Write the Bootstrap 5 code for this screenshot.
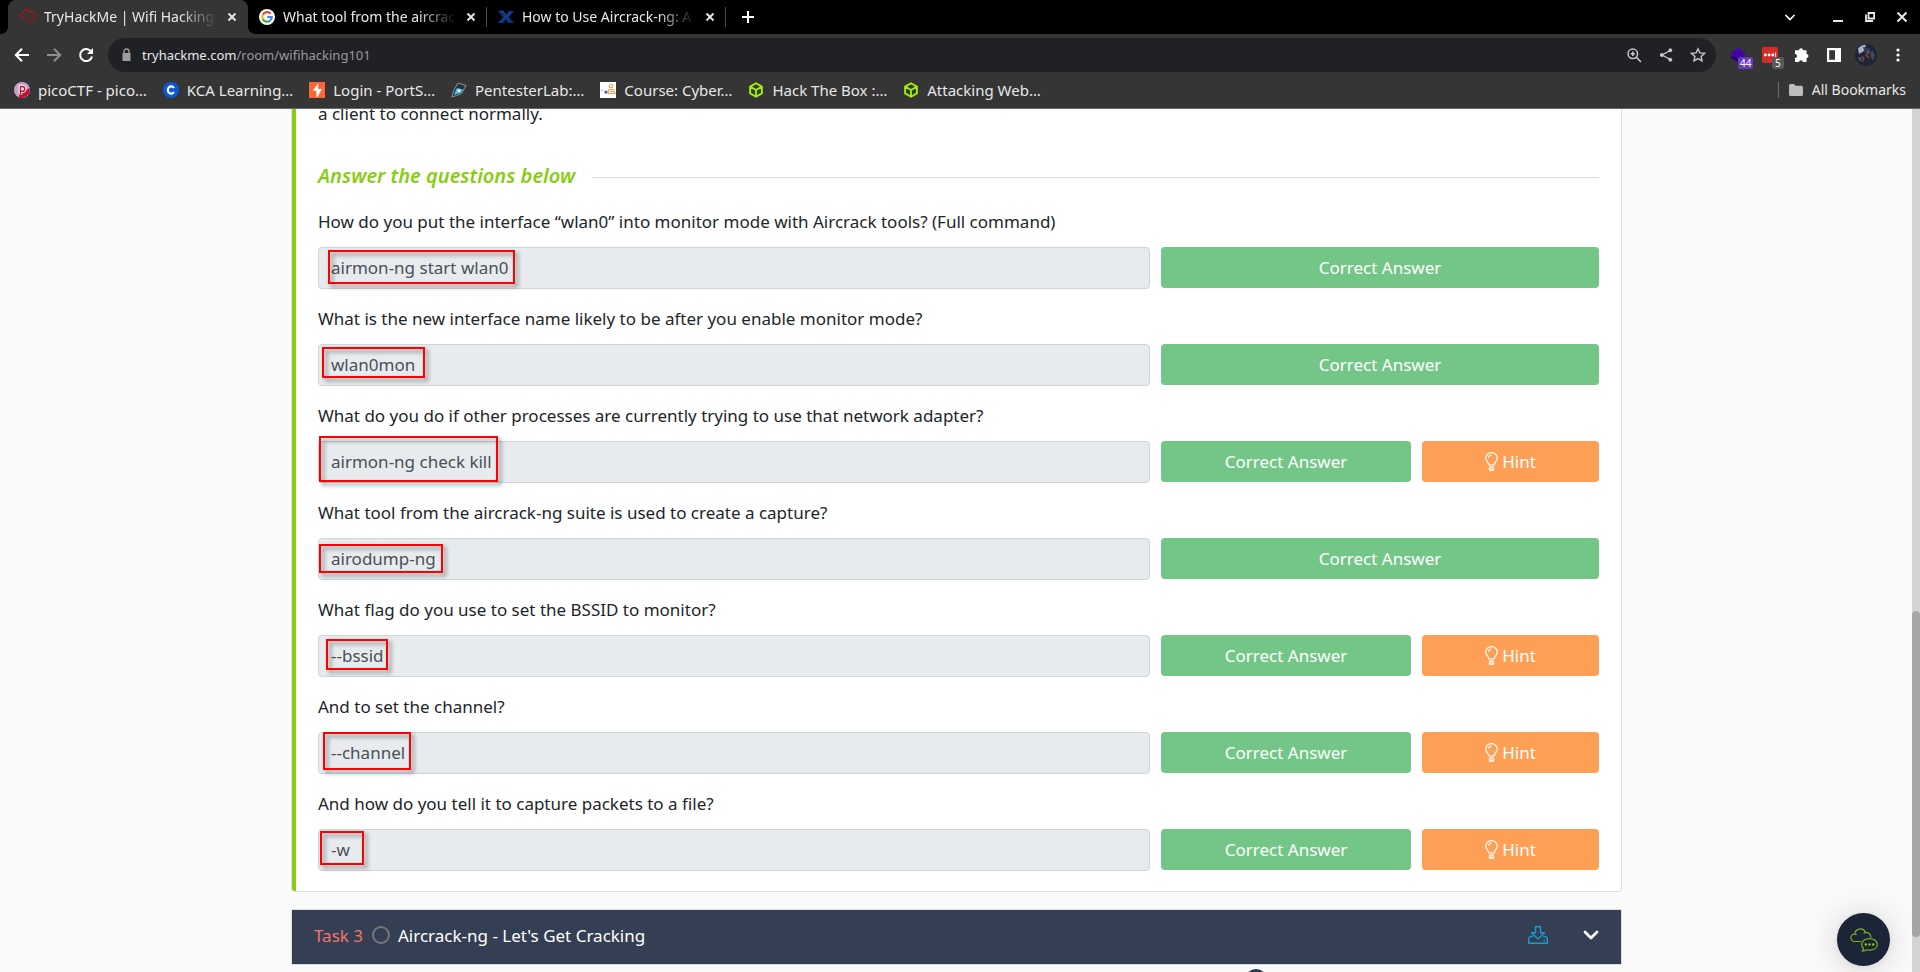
<!DOCTYPE html>
<html lang="en">
<head>
<meta charset="utf-8">
<meta name="viewport" content="width=device-width, initial-scale=1">
<title>TryHackMe | Wifi Hacking 101</title>
<link href="https://cdn.jsdelivr.net/npm/bootstrap@5.3.0/dist/css/bootstrap.min.css" rel="stylesheet">
<style>
  body { font-family: "Noto Sans", sans-serif; background: #fafafa; color: #212529; }
  svg { display: block; flex: none; }
  button svg { pointer-events: none; }

  /* browser frame */
  .frame-top { background: #353535; color: #e8e8e8; font-size: 14px; line-height: 20px; border-bottom: 1px solid #6b6666; }
  .plain-btn { background: none; border: 0; padding: 0; color: inherit; display: flex; align-items: center; justify-content: center; }
  .tab-strip { background: #000; height: 34px; padding-left: 8px; }
  .tab-item { width: 238px; height: 34px; padding: 0 8px 0 11px; gap: 8px; position: relative; }
  .tab-item.current { background: #353535; border-radius: 8px 8px 0 0; width: 240px; padding: 0 9px 0 12px; }
  .tab-item.current::before, .tab-item.current::after { content: ""; position: absolute; bottom: 0; width: 8px; height: 8px; }
  .tab-item.current::before { left: -8px; background: radial-gradient(circle at 0 0, #000 8px, #353535 8px); }
  .tab-item.current::after { right: -8px; background: radial-gradient(circle at 100% 0, #000 8px, #353535 8px); }
  .tab-name { flex: 1; min-width: 0; overflow: hidden; white-space: nowrap; color: #e8e8e8; text-decoration: none;
    -webkit-mask-image: linear-gradient(to right, #000 78%, transparent); mask-image: linear-gradient(to right, #000 78%, transparent); }
  .tab-close { width: 14px; height: 20px; }
  .tab-rule { width: 1px; height: 20px; background: #4a4a4a; }
  .window-tools { gap: 16px; padding: 0 10px 0 0; }
  .tool-row { height: 42px; padding: 0 14px; gap: 10px; }
  .tool-row .plain-btn { width: 16px; height: 34px; flex: none; }
  .url-box { background: #202124; border-radius: 17px; height: 34px; font-size: 13px; color: #e8e8e8; padding: 0 10px 0 13px; gap: 10px; }
  .url-path { color: #9a9a9a; }
  .ext-tag { position: absolute; left: 8px; top: 19px; font-size: 10px; line-height: 12px; color: #fff; border-radius: 2px; padding: 0 2px; background: #673ab7; }
  .ext-tag.grey { background: #585858; padding: 0 3px; left: 10px; }
  .mark-row { height: 32px; padding: 0 14px 4px 14px; gap: 16px; font-size: 15px; }
  .mark-link { display: flex; align-items: center; gap: 8px; color: #e8e8e8; text-decoration: none; white-space: nowrap; }
  .mark-all { gap: 9px; font-size: 14px; }
  .mark-rule { width: 1px; height: 16px; background: #707070; }

  /* room page */
  .viewport { position: relative; overflow: hidden; padding: 0 8px 0 1px; }
  .room { max-width: 1331px; width: 100%; font-size: 17px; line-height: 27px; }
  .task-card { background: #fff; border: 1px solid #dedede; border-top: 0; border-radius: 0 0 4px 4px; }
  .task-body { border-left: 4px solid #88cc14; padding: 0 22px 20px 22px; border-bottom-left-radius: 3px; }
  .task-end { margin: -9px 0 34px; }
  .ask-title { color: #88cc14; font-size: 20px; font-weight: 600; font-style: italic; line-height: 30px; margin: 0; }
  .ask-head { gap: 17px; margin-bottom: 18px; }
  .ask-head hr { margin: 2px 0 0; border-color: #777; }
  .question + .question { margin-top: 17px; }
  .question label { display: block; line-height: 25px; margin-bottom: 13px; }
  .answer-row { position: relative; display: grid; grid-template-columns: 832fr 438fr; gap: 11px; }
  .answer-row .form-control { height: 42px; padding: 0 12px 2px; font-size: 17px; background: #e7ebee; border-color: #ced4da; border-radius: 4px; color: #495057; }
  .answer-tools { display: grid; grid-template-columns: 250fr 177fr; gap: 11px; }
  .answer-tools .btn { height: 41px; padding: 0; font-size: 17px; border: 0; border-radius: 4px; color: #fff; opacity: 1; }
  .answer-tools .btn:only-child { grid-column: 1 / -1; }
  .btn-right { background: #74c687 !important; }
  .btn-hint { background: #fd9f54 !important; display: flex; align-items: center; justify-content: center; gap: 4px; }
  .callout { position: absolute; border: 2px solid #f00; filter: drop-shadow(3px 3px 2px rgba(0,0,0,.45)); pointer-events: none; }
  .callout-start { left: 10px; top: 3px; width: 187px; height: 34px; }
  .callout-name { left: 4px; top: 3px; width: 103px; height: 31px; }
  .callout-kill { left: 1px; top: -5px; width: 179px; height: 46px; }
  .callout-dump { left: 1px; top: 6px; width: 124px; height: 29px; }
  .callout-bssid { left: 8px; top: 4px; width: 62px; height: 31px; }
  .callout-channel { left: 5px; top: 0; width: 88px; height: 38px; }
  .callout-write { left: 2px; top: 2px; width: 44px; height: 34px; }
  .next-task { background: #353f54; color: #fff; border: 1px solid #dedede; margin-top: 17px; height: 56px; padding: 0 22px 4px; }
  .next-task .task-no { color: #f4736e; }
  .ring { width: 18px; height: 18px; border: 2px solid #777; border-radius: 50%; margin: 0 8px 0 9px; }
  .task-icons { gap: 35px; }
  .pin-dot { width: 22px; height: 22px; border-radius: 50%; background: #2a3850; margin: 4px 355px 0 auto; }
  .scroll-track { position: absolute; right: 0; top: 0; bottom: 0; width: 8px; background: #d4d4d4; }
  .scroll-thumb { position: absolute; left: 0; right: 0; top: 58.2%; height: 37.7%; background: #a5a5a5; border-radius: 4px; }
  .chat-btn { position: absolute; right: 30px; bottom: 6px; width: 53px; height: 53px; border-radius: 50%; border: 0; background: #1c2538; padding: 0; box-shadow: 0 1px 6px rgba(0,0,0,.06), 0 2px 32px rgba(0,0,0,.16); display: flex; align-items: center; justify-content: center; }
</style>
</head>
<body class="vh-100 d-flex flex-column overflow-hidden">

<svg width="0" height="0" class="position-absolute" aria-hidden="true">
  <symbol id="i-close" viewBox="0 0 14 14"><path d="M3.500 3.500l7 7M10.500 3.500l-7 7" stroke="currentColor" stroke-width="1.900"/></symbol>
  <symbol id="i-bulb" viewBox="0 0 13 19"><g fill="none" stroke="currentColor" stroke-width="1.200"><path d="M4 13c0-2.500-3.300-3.500-3.300-7a5.800 5.300 0 0 1 11.600 0c0 3.500-3.300 4.500-3.300 7z"/><path d="M3.500 5.800c0-1.600 1.200-2.700 2.800-2.700M4 15.200h5M4.300 17h4.400l-.8 1.300H5z"/></g></symbol>
  <symbol id="i-box" viewBox="0 0 16 16"><path d="M8 1.200l5.900 3.400v6.800L8 14.800l-5.900-3.400V4.600zM2.100 4.600L8 8l5.900-3.400M8 8v6.800" fill="none" stroke="#9fef00" stroke-width="1.900" stroke-linejoin="round"/></symbol>
</svg>

<header class="frame-top flex-shrink-0">
  <div class="tab-strip d-flex align-items-center">
    <div class="tab-item current d-flex align-items-center">
      <svg width="16" height="16" viewBox="0 0 16 16" fill="none" stroke="#b01318" stroke-width="1.200"><path d="M4.500 9.500H3.200A2.700 2.700 0 0 1 3 4.200 3.800 3.800 0 0 1 10.300 3a3 3 0 0 1 4.400 2.800A2.200 2.200 0 0 1 13.500 8"/><path d="M7 9h2M11 9h3M6 12h2M10 11.500h1.500M13 12h1.500M8.500 14.500H11M13.300 15h1" stroke="#8e1418" stroke-width="1.300"/></svg>
      <a class="tab-name" href="#">TryHackMe | Wifi Hacking 101</a>
      <button class="plain-btn tab-close" type="button" aria-label="Close tab"><svg width="14" height="14"><use href="#i-close"/></svg></button>
    </div>
    <div class="tab-item d-flex align-items-center">
      <svg width="16" height="16" viewBox="0 0 16 16"><circle cx="8" cy="8" r="8" fill="#fff"/><g fill="none" stroke-width="2.200"><path d="M11.600 4.700A4.700 4.700 0 0 0 3.900 5.700" stroke="#ea4335"/><path d="M3.900 5.700a4.700 4.700 0 0 0 0 4.600" stroke="#fbbc05"/><path d="M3.900 10.300a4.700 4.700 0 0 0 7.300 1.200" stroke="#34a853"/><path d="M11.200 11.500A4.700 4.700 0 0 0 12.700 8H8.200" stroke="#4285f4"/></g></svg>
      <a class="tab-name" href="#">What tool from the aircrack-ng suite</a>
      <button class="plain-btn tab-close" type="button" aria-label="Close tab"><svg width="14" height="14"><use href="#i-close"/></svg></button>
    </div>
    <span class="tab-rule"></span>
    <div class="tab-item d-flex align-items-center">
      <svg width="16" height="16" viewBox="0 0 16 16"><path d="M0 2h5.500l2.500 3.500L10.500 2H16l-5 6 5 6h-5.500L8 10.500 5.500 14H0l5-6z" fill="#0d2f7d"/><path d="M1 2h4l6 11M1 14L14.500 2.500" fill="none" stroke="#3b5fa8" stroke-width=".5"/></svg>
      <a class="tab-name" href="#">How to Use Aircrack-ng: A Guide</a>
      <button class="plain-btn tab-close" type="button" aria-label="Close tab"><svg width="14" height="14"><use href="#i-close"/></svg></button>
    </div>
    <span class="tab-rule"></span>
    <button class="plain-btn ms-3" type="button" aria-label="New tab"><svg width="12" height="12" viewBox="0 0 12 12"><path d="M6 0v12M0 6h12" stroke="#fff" stroke-width="2"/></svg></button>
    <div class="window-tools d-flex align-items-center ms-auto">
      <button class="plain-btn me-3" type="button" aria-label="Search tabs"><svg width="16" height="16" viewBox="0 0 16 16"><path d="M3.500 6L8 10.500 12.500 6" fill="none" stroke="#fff" stroke-width="1.700"/></svg></button>
      <button class="plain-btn" type="button" aria-label="Minimize"><svg width="16" height="16" viewBox="0 0 16 16"><path d="M3 12h10" stroke="#e8e8e8" stroke-width="2"/></svg></button>
      <button class="plain-btn" type="button" aria-label="Restore"><svg width="16" height="16" viewBox="0 0 16 16" fill="none" stroke="#e8e8e8" stroke-width="1.800"><path d="M6.500 4h5.600v5.500H6.500z"/><path d="M4 5.500V12h7"/></svg></button>
      <button class="plain-btn" type="button" aria-label="Close window"><svg width="16" height="16" viewBox="0 0 16 16"><path d="M3.500 3.500l9 9M12.500 3.500l-9 9" stroke="#e8e8e8" stroke-width="2"/></svg></button>
    </div>
  </div>

  <div class="tool-row d-flex align-items-center">
    <div class="d-flex gap-3 me-1">
      <button class="plain-btn" type="button" aria-label="Back"><svg width="16" height="16" viewBox="0 0 16 16"><path d="M15 8H2M8 1.800L1.800 8 8 14.200" fill="none" stroke="#fff" stroke-width="2"/></svg></button>
      <button class="plain-btn" type="button" aria-label="Forward"><svg width="16" height="16" viewBox="0 0 16 16"><path d="M1 8h13M8 1.800L14.200 8 8 14.200" fill="none" stroke="#8d8d8d" stroke-width="2"/></svg></button>
      <button class="plain-btn" type="button" aria-label="Reload"><svg width="16" height="16" viewBox="0 0 16 16"><path d="M13.200 4.800A6 6 0 1 0 14 9.500" fill="none" stroke="#fff" stroke-width="2"/><path d="M15 1v6H9z" fill="#fff"/></svg></button>
    </div>
    <div class="url-box d-flex align-items-center flex-grow-1">
      <svg width="11" height="14" viewBox="0 0 11 14"><path d="M1.500 5h8v8h-8z" fill="#9a9ca0"/><path d="M3 5.500V3.500a2.500 2.500 0 0 1 5 0v2" fill="none" stroke="#9a9ca0" stroke-width="1.400"/></svg>
      <div role="textbox" aria-label="Address">tryhackme.com<span class="url-path">/room/wifihacking101</span></div>
      <div class="d-flex gap-3 ms-auto">
        <button class="plain-btn" type="button" aria-label="Zoom"><svg width="16" height="16" viewBox="0 0 16 16" fill="none" stroke="#c8c8c8" stroke-width="1.500"><circle cx="6.800" cy="6.800" r="4.800"/><path d="M10.400 10.400L15 15M4.600 6.800H9M6.800 4.600V9"/></svg></button>
        <button class="plain-btn" type="button" aria-label="Share"><svg width="16" height="16" viewBox="0 0 16 16" fill="#c8c8c8" stroke="#c8c8c8"><path d="M12.200 3.500L4 8l8.200 4.500" fill="none" stroke-width="1.300"/><circle cx="12.300" cy="3.300" r="1.500"/><circle cx="3.800" cy="8" r="1.500"/><circle cx="12.300" cy="12.700" r="1.500"/></svg></button>
        <button class="plain-btn" type="button" aria-label="Bookmark"><svg width="16" height="16" viewBox="0 0 16 16"><path d="M8 1.800l1.900 4.100 4.500.5-3.300 3 .9 4.400L8 11.600l-4 2.200.9-4.400-3.300-3 4.500-.5z" fill="none" stroke="#c8c8c8" stroke-width="1.400"/></svg></button>
      </div>
    </div>
    <div class="d-flex gap-3 ms-1">
      <button class="plain-btn position-relative" type="button" aria-label="Extension"><svg width="16" height="16" viewBox="0 0 16 16"><path d="M0 10.500L8 6l8 4.500L8 15z" fill="#26007a"/><path d="M0 6.500L8 .8l8 5.700-8 5.500z" fill="#4303a8"/></svg><span class="ext-tag">44</span></button>
      <button class="plain-btn position-relative" type="button" aria-label="Password manager"><svg width="16" height="16" viewBox="0 0 16 16"><rect width="16" height="16" rx="1.500" fill="#d32d27"/><g fill="#fff"><circle cx="3.400" cy="8" r="1.400"/><circle cx="7.100" cy="8" r="1.400"/><circle cx="10.800" cy="8" r="1.400"/><path d="M13.200 5.500h.9v5h-.9z"/></g></svg><span class="ext-tag grey">5</span></button>
      <button class="plain-btn" type="button" aria-label="Extensions"><svg width="16" height="16" viewBox="0 0 16 16"><path d="M5 3.300a2 2 0 0 1 4 0h3.500v3.600a2 2 0 1 1 0 4V15H9a2.100 2.100 0 0 0-4.100 0H1v-3.900a2.100 2.100 0 0 0 0-4.200V3.300z" fill="#fff"/></svg></button>
      <button class="plain-btn" type="button" aria-label="Side panel"><svg width="16" height="16" viewBox="0 0 16 16"><path d="M1 1h14v14H1zM3.200 3.200v9.600H9V3.200z" fill="#fff" fill-rule="evenodd"/></svg></button>
      <button class="plain-btn" type="button" aria-label="Profile"><svg width="22" height="22" viewBox="0 0 22 22"><circle cx="11" cy="11" r="11" fill="#1e2433"/><path d="M3 4.500a10 10 0 0 1 8-3.800L9 7l-5 3z" fill="#aab0c0"/><path d="M8 3l6 1 3 5-4-1-3 2z" fill="#333c58"/><path d="M12 7l2 2-3 2 3 3M7 12l2 3-2 3" fill="none" stroke="#8f4b45" stroke-width="1.200"/><path d="M17 6l3 5-2 6-3-5z" fill="#394960"/><path d="M3 13l4 1-2 4z" fill="#4a5d75"/></svg></button>
      <button class="plain-btn" type="button" aria-label="Menu"><svg width="16" height="16" viewBox="0 0 16 16" fill="#fff"><circle cx="8" cy="3" r="1.600"/><circle cx="8" cy="8" r="1.600"/><circle cx="8" cy="13" r="1.600"/></svg></button>
    </div>
  </div>

  <nav class="mark-row d-flex align-items-center" aria-label="Bookmarks">
    <a class="mark-link" href="#"><svg width="16" height="16" viewBox="0 0 16 16"><circle cx="8" cy="8" r="8" fill="#c8a2cd"/><path d="M15.500 6A8 8 0 0 1 5 15.400V12z" fill="#c41230"/><path d="M6.500 12.500v-8H8.300a2.400 2.400 0 0 1 0 4.800H6.500" fill="none" stroke="#fff" stroke-width="3.600"/><path d="M6.500 12.500v-8H8.300a2.400 2.400 0 0 1 0 4.800H6.500" fill="none" stroke="#c41230" stroke-width="1.500"/></svg>picoCTF - pico…</a>
    <a class="mark-link" href="#"><svg width="16" height="16" viewBox="0 0 16 16"><circle cx="8" cy="8" r="8" fill="#0b57d8"/><path d="M10.900 6A3.300 3.600 0 1 0 10.900 10" fill="none" stroke="#fff" stroke-width="2.200"/></svg>KCA Learning…</a>
    <a class="mark-link" href="#"><svg width="16" height="16" viewBox="0 0 16 16"><path d="M0 0h16v16H0z" fill="#ff6633"/><path d="M9.300 1L3.800 8.800h3.600V15h1.200l4.200-8H9.200V1z" fill="#fff"/></svg>Login - PortS…</a>
    <a class="mark-link" href="#"><svg width="16" height="16" viewBox="0 0 16 16"><path d="M7 1l8 2.500-4.500 8-5 2L.8 15 3 8z" fill="#26333c" stroke="#7d9aa8"/><path d="M6 6l6 1.500-2.500 3.500-4 1L3 13l1.500-4z" fill="#5bc0e8"/><circle cx="8" cy="8.800" r="1.300" fill="#fff"/></svg>PentesterLab:…</a>
    <a class="mark-link" href="#"><svg width="16" height="16" viewBox="0 0 16 16"><path d="M0 0h16v16H0z" fill="#fff"/><path d="M1 8.200h2M4.500 9h3l-.8 2.500H5z" fill="#2b4aa0" stroke="#7d93c8" stroke-width=".8"/><g fill="none" stroke="#f0a050" stroke-width="1.100"><circle cx="11" cy="4" r="1.700"/><path d="M9 7.500h4l2 4H8zM10 9.500h3"/></g></svg>Course: Cyber…</a>
    <a class="mark-link" href="#"><svg width="16" height="16"><use href="#i-box"/></svg>Hack The Box :…</a>
    <a class="mark-link" href="#"><svg width="16" height="16"><use href="#i-box"/></svg>Attacking Web…</a>
    <div class="mark-all d-flex align-items-center ms-auto">
      <span class="mark-rule"></span>
      <a class="mark-link" href="#"><svg width="16" height="16" viewBox="0 0 16 16"><path d="M1 3.500A1.500 1.500 0 0 1 2.500 2H6l1.700 1.700h5.800A1.500 1.500 0 0 1 15 5.200v7.300a1.500 1.500 0 0 1-1.500 1.500h-11A1.500 1.500 0 0 1 1 12.500z" fill="#bdbdbd"/></svg>All Bookmarks</a>
    </div>
  </nav>
</header>

<main class="viewport flex-grow-1">
  <div class="room mx-auto">
    <section class="task-card">
      <div class="task-body">
        <p class="task-end">a client to connect normally.</p>
        <div class="ask-head d-flex align-items-center">
          <h2 class="ask-title">Answer the questions below</h2>
          <hr class="flex-grow-1">
        </div>

        <div class="question">
          <label for="q1">How do you put the interface “wlan0” into monitor mode with Aircrack tools? (Full command)</label>
          <div class="answer-row">
            <input class="form-control" id="q1" value="airmon-ng start wlan0" disabled>
            <div class="answer-tools"><button class="btn btn-right" type="button" disabled>Correct Answer</button></div>
            <span class="callout callout-start"></span>
          </div>
        </div>
        <div class="question">
          <label for="q2">What is the new interface name likely to be after you enable monitor mode?</label>
          <div class="answer-row">
            <input class="form-control" id="q2" value="wlan0mon" disabled>
            <div class="answer-tools"><button class="btn btn-right" type="button" disabled>Correct Answer</button></div>
            <span class="callout callout-name"></span>
          </div>
        </div>
        <div class="question">
          <label for="q3">What do you do if other processes are currently trying to use that network adapter?</label>
          <div class="answer-row">
            <input class="form-control" id="q3" value="airmon-ng check kill" disabled>
            <div class="answer-tools"><button class="btn btn-right" type="button" disabled>Correct Answer</button><button class="btn btn-hint" type="button"><svg width="13" height="19"><use href="#i-bulb"/></svg>Hint</button></div>
            <span class="callout callout-kill"></span>
          </div>
        </div>
        <div class="question">
          <label for="q4">What tool from the aircrack-ng suite is used to create a capture?</label>
          <div class="answer-row">
            <input class="form-control" id="q4" value="airodump-ng" disabled>
            <div class="answer-tools"><button class="btn btn-right" type="button" disabled>Correct Answer</button></div>
            <span class="callout callout-dump"></span>
          </div>
        </div>
        <div class="question">
          <label for="q5">What flag do you use to set the BSSID to monitor?</label>
          <div class="answer-row">
            <input class="form-control" id="q5" value="--bssid" disabled>
            <div class="answer-tools"><button class="btn btn-right" type="button" disabled>Correct Answer</button><button class="btn btn-hint" type="button"><svg width="13" height="19"><use href="#i-bulb"/></svg>Hint</button></div>
            <span class="callout callout-bssid"></span>
          </div>
        </div>
        <div class="question">
          <label for="q6">And to set the channel?</label>
          <div class="answer-row">
            <input class="form-control" id="q6" value="--channel" disabled>
            <div class="answer-tools"><button class="btn btn-right" type="button" disabled>Correct Answer</button><button class="btn btn-hint" type="button"><svg width="13" height="19"><use href="#i-bulb"/></svg>Hint</button></div>
            <span class="callout callout-channel"></span>
          </div>
        </div>
        <div class="question">
          <label for="q7">And how do you tell it to capture packets to a file?</label>
          <div class="answer-row">
            <input class="form-control" id="q7" value="-w" disabled>
            <div class="answer-tools"><button class="btn btn-right" type="button" disabled>Correct Answer</button><button class="btn btn-hint" type="button"><svg width="13" height="19"><use href="#i-bulb"/></svg>Hint</button></div>
            <span class="callout callout-write"></span>
          </div>
        </div>
      </div>
    </section>

    <section class="next-task d-flex align-items-center">
      <span class="task-no">Task 3</span>
      <span class="ring"></span>
      <span>Aircrack-ng - Let's Get Cracking</span>
      <div class="task-icons d-flex align-items-center ms-auto">
        <button class="plain-btn" type="button" aria-label="Download task files"><svg width="20" height="18" viewBox="0 0 20 18" fill="none" stroke="#189bd4" stroke-width="1.400" stroke-linejoin="round"><path d="M7.500.7h5v6h4L10 13 3.500 6.700h4z"/><path d="M5 10.500H2.500L.7 12v5.300h18.600V12l-1.800-1.500H15M15.500 14.500H17"/></svg></button>
        <button class="plain-btn" type="button" aria-label="Expand task"><svg width="16" height="16" viewBox="0 0 16 16"><path d="M2 5l6 6 6-6" fill="none" stroke="#fff" stroke-width="2.800" stroke-linecap="round" stroke-linejoin="round"/></svg></button>
      </div>
    </section>
    <div class="pin-dot"></div>
  </div>

  <div class="scroll-track"><div class="scroll-thumb"></div></div>
  <button class="chat-btn" type="button" aria-label="Open chat"><svg width="28" height="24" viewBox="0 0 28 24" fill="none" stroke="#7ab814" stroke-width="1.200" stroke-linejoin="round"><path d="M11 13.500H4.500a3.700 3.700 0 0 1 .2-7.400 2 2 0 0 1 1.800.8M4.700 6.100A5.600 5.600 0 0 1 15.400 4.300a3.800 3.800 0 0 0-1.600 1.500M15.400 4.300c3 0 5.200 2 5.600 5"/><path d="M19.500 10.600c4.400 0 7.800 2.300 7.800 5.800s-3.400 5.700-7.800 5.700c-1 0-2-.1-2.800-.4-1 1-2.500 1.500-4.500 1.500.8-.8 1.200-1.700 1.200-2.900a5.500 5.500 0 0 1-1.700-3.900c0-3.500 3.400-5.800 7.800-5.800z"/><g fill="#88cc14" stroke="none"><circle cx="15.800" cy="16.500" r="1.200"/><circle cx="19.500" cy="16.500" r="1.200"/><circle cx="23.200" cy="16.500" r="1.200"/></g></svg></button>
</main>

<script src="https://cdn.jsdelivr.net/npm/bootstrap@5.3.0/dist/js/bootstrap.bundle.min.js"></script>
</body>
</html>
